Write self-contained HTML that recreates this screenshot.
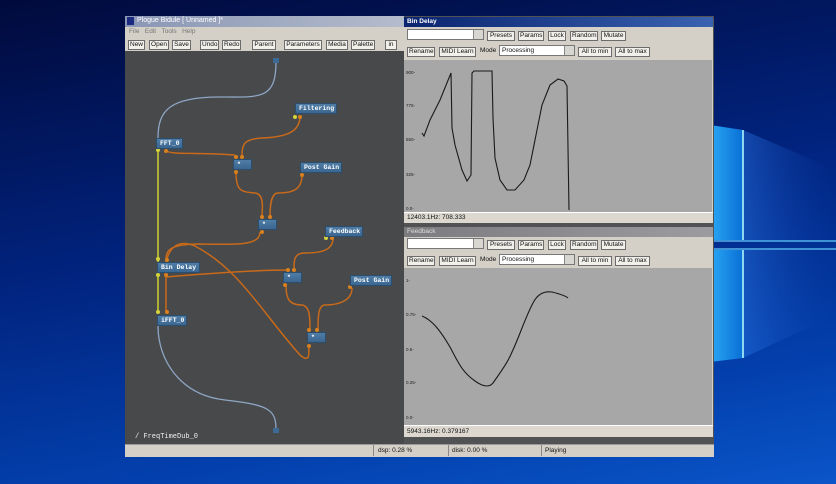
<!DOCTYPE html>
<html><head><meta charset="utf-8"><style>
*{margin:0;padding:0;box-sizing:border-box}
body{width:836px;height:484px;overflow:hidden;position:relative;font-family:"Liberation Sans",sans-serif;background:linear-gradient(170deg,#010a3c 0%,#01237e 45%,#0340ad 80%,#0a55c9 100%)}
.a{position:absolute}
.btn{position:absolute;height:10px;background:#f2f0ea;border:1px solid #6c6c6c;font-size:6.5px;line-height:8px;text-align:center;color:#111;padding:0 1px;white-space:nowrap}
.node{position:absolute;height:11px;background:linear-gradient(#4f7da6,#3a6690);color:#fff;font-family:"Liberation Mono",monospace;font-weight:bold;font-size:6.5px;line-height:10px;padding-left:3px;border:1px solid #2c4e6e;white-space:nowrap;overflow:hidden}
.t{position:absolute;font-size:6.5px;color:#111;white-space:nowrap}
.combo{position:absolute;height:11px;background:#fff;border:1px solid #777}
.combo:after{content:"";position:absolute;right:0;top:0;width:9px;height:9px;background:#d8d6d0;border-left:1px solid #888}
</style></head><body>
<svg class="a" style="left:0;top:0" width="836" height="484">
<defs><linearGradient id="pn" x1="0" x2="1"><stop offset="0" stop-color="#2aa8f5"/><stop offset="1" stop-color="#0a6fd6"/></linearGradient>
<linearGradient id="bm" x1="0" x2="1"><stop offset="0" stop-color="#2a7ae8" stop-opacity=".45"/><stop offset="1" stop-color="#1040b0" stop-opacity="0"/></linearGradient></defs>
<polygon points="743,130 836,170 836,240 743,240" fill="url(#bm)"/>
<polygon points="743,250 836,250 836,315 743,358" fill="url(#bm)"/>
<polygon points="710,125 743,130 743,240 710,240" fill="url(#pn)"/>
<polygon points="710,250 743,250 743,358 710,362" fill="url(#pn)"/>
<line x1="743" y1="130" x2="743" y2="240" stroke="#bff" stroke-width="1.5"/>
<line x1="743" y1="250" x2="743" y2="358" stroke="#bff" stroke-width="1.5"/>
<line x1="710" y1="241" x2="836" y2="241" stroke="#6cf" stroke-width="1.2"/>
<line x1="710" y1="249" x2="836" y2="249" stroke="#6cf" stroke-width="1.2"/>
</svg>
<div class="a" style="left:125px;top:16px;width:589px;height:441px;background:#d4d0c8"></div>
<div class="a" style="left:125px;top:16px;width:279px;height:11px;background:linear-gradient(90deg,#8a96b4,#b4bccc)"></div>
<div class="a" style="left:127px;top:17px;width:7px;height:8px;background:#1a2a80"></div>
<div class="t" style="left:137px;top:17px;color:#fff;font-size:7px">Plogue Bidule [ Unnamed ]*</div>
<div class="t" style="left:129px;top:28px;color:#777">File&nbsp;&nbsp;&nbsp;Edit&nbsp;&nbsp;&nbsp;Tools&nbsp;&nbsp;&nbsp;Help</div>
<div class="btn" style="left:128px;top:40px;width:17px">New</div>
<div class="btn" style="left:149px;top:40px;width:20px">Open</div>
<div class="btn" style="left:172px;top:40px;width:19px">Save</div>
<div class="btn" style="left:200px;top:40px;width:19px">Undo</div>
<div class="btn" style="left:222px;top:40px;width:19px">Redo</div>
<div class="btn" style="left:252px;top:40px;width:24px">Parent</div>
<div class="btn" style="left:284px;top:40px;width:38px">Parameters</div>
<div class="btn" style="left:326px;top:40px;width:22px">Media</div>
<div class="btn" style="left:351px;top:40px;width:24px">Palette</div>
<div class="btn" style="left:385px;top:40px;width:12px">in</div>
<div class="a" style="left:125px;top:51px;width:279px;height:393px;background:#47494b"></div>
<svg class="a" style="left:0;top:0" width="836" height="484" fill="none">
<g stroke="#8fa6c4" stroke-width="1.3">
<path d="M276,62 C276,100 260,97 220,97 C170,97 158,110 158,138"/>
<path d="M158,326 C158,360 180,395 225,400 C270,405 276,410 276,430"/>
</g>
<g stroke="#c7c930" stroke-width="1.6"><path d="M158,150 L158,262 M158,277 L158,313"/></g>
<g stroke="#c86a1a" stroke-width="1.5">
<path d="M166,151 C175,155 190,152 235,155"/>
<path d="M300,116 C300,130 290,137 262,138 C243,139 242,145 242,157"/>
<path d="M236,172 C236,190 240,192 255,193 C265,194 262,210 262,217"/>
<path d="M302,175 C302,190 292,193 278,193 C270,193 270,210 270,217"/>
<path d="M260,232 C260,245 240,245 200,244 C170,244 166,250 166,260"/>
<path d="M333,238 C333,250 322,253 305,253 C293,253 294,262 294,270"/>
<path d="M166,277 C190,275 250,270 288,270"/>
<path d="M166,277 L166,313"/>
<path d="M286,285 C286,300 290,305 302,305 C310,306 310,318 310,330"/>
<path d="M352,288 C352,300 340,305 325,305 C318,305 318,318 318,330"/>
<path d="M166,262 C170,245 180,240 195,246 C240,270 260,310 300,355 C312,365 308,350 309,345"/>
</g>
<g fill="#d8801e"><circle cx="166" cy="151" r="2"/><circle cx="300" cy="117" r="2"/><circle cx="236" cy="157" r="2"/><circle cx="242" cy="157" r="2"/><circle cx="236" cy="172" r="2"/><circle cx="302" cy="175" r="2"/><circle cx="262" cy="217" r="2"/><circle cx="270" cy="217" r="2"/><circle cx="262" cy="232" r="2"/><circle cx="332" cy="238" r="2"/><circle cx="167" cy="260" r="2"/><circle cx="166" cy="275" r="2"/><circle cx="288" cy="270" r="2"/><circle cx="294" cy="270" r="2"/><circle cx="285" cy="285" r="2"/><circle cx="350" cy="287" r="2"/><circle cx="309" cy="330" r="2"/><circle cx="317" cy="330" r="2"/><circle cx="309" cy="346" r="2"/><circle cx="167" cy="312" r="2"/></g>
<g fill="#d5d43a"><circle cx="158" cy="150" r="2"/><circle cx="295" cy="117" r="2"/><circle cx="326" cy="238" r="2"/><circle cx="158" cy="259" r="2"/><circle cx="158" cy="275" r="2"/><circle cx="158" cy="312" r="2"/></g>
<rect x="273" y="58" width="6" height="5" fill="#3d6a94"/><rect x="273" y="428" width="6" height="5" fill="#3d6a94"/>
</svg>
<div class="node" style="left:156px;top:138px;width:27px">FFT_0</div>
<div class="node" style="left:295px;top:103px;width:42px">Filtering</div>
<div class="node" style="left:233px;top:159px;width:19px">*</div>
<div class="node" style="left:300px;top:162px;width:42px">Post Gain</div>
<div class="node" style="left:258px;top:219px;width:19px">*</div>
<div class="node" style="left:325px;top:226px;width:38px">Feedback</div>
<div class="node" style="left:157px;top:262px;width:43px">Bin Delay</div>
<div class="node" style="left:283px;top:272px;width:19px">*</div>
<div class="node" style="left:350px;top:275px;width:42px">Post Gain</div>
<div class="node" style="left:157px;top:315px;width:30px">iFFT_0</div>
<div class="node" style="left:307px;top:332px;width:19px">*</div>
<div class="t" style="left:135px;top:433px;color:#eee;font-family:'Liberation Mono',monospace;font-size:7px">/ FreqTimeDub_0</div>
<div class="a" style="left:404px;top:16px;width:310px;height:428px;background:#505254"></div>
<div class="a" style="left:404px;top:17px;width:309px;height:10px;background:linear-gradient(90deg,#0a2470,#3a62b0)"></div>
<div class="t" style="left:407px;top:18px;color:#fff;font-weight:bold">Bin Delay</div>
<div class="a" style="left:404px;top:27px;width:309px;height:185px;background:#d4d0c8"></div>
<div class="combo" style="left:407px;top:29px;width:77px"></div>
<div class="btn" style="left:487px;top:31px;width:28px">Presets</div>
<div class="btn" style="left:518px;top:31px;width:26px">Params</div>
<div class="btn" style="left:548px;top:31px;width:18px">Lock</div>
<div class="btn" style="left:570px;top:31px;width:28px">Random</div>
<div class="btn" style="left:601px;top:31px;width:25px">Mutate</div>
<div class="btn" style="left:407px;top:47px;width:28px">Rename</div>
<div class="btn" style="left:439px;top:47px;width:37px">MIDI Learn</div>
<div class="t" style="left:480px;top:47px">Mode</div>
<div class="combo" style="left:499px;top:45px;width:76px"><span class="t" style="left:2px;top:1px">Processing</span></div>
<div class="btn" style="left:578px;top:47px;width:34px">All to min</div>
<div class="btn" style="left:615px;top:47px;width:35px">All to max</div>
<div class="a" style="left:404px;top:60px;width:308px;height:152px;background:#a7a7a7"></div>
<div class="a" style="left:404px;top:212px;width:309px;height:11px;background:#dcd8d0;border-top:1px solid #fff"><span class="t" style="left:3px;top:1px">12403.1Hz: 708.333</span></div>
<div class="a" style="left:404px;top:227px;width:309px;height:10px;background:linear-gradient(90deg,#7c7c80,#9c9ca0)"></div>
<div class="t" style="left:407px;top:228px;color:#ddd">Feedback</div>
<div class="a" style="left:404px;top:237px;width:309px;height:188px;background:#d4d0c8"></div>
<div class="combo" style="left:407px;top:238px;width:77px"></div>
<div class="btn" style="left:487px;top:240px;width:28px">Presets</div>
<div class="btn" style="left:518px;top:240px;width:26px">Params</div>
<div class="btn" style="left:548px;top:240px;width:18px">Lock</div>
<div class="btn" style="left:570px;top:240px;width:28px">Random</div>
<div class="btn" style="left:601px;top:240px;width:25px">Mutate</div>
<div class="btn" style="left:407px;top:256px;width:28px">Rename</div>
<div class="btn" style="left:439px;top:256px;width:37px">MIDI Learn</div>
<div class="t" style="left:480px;top:256px">Mode</div>
<div class="combo" style="left:499px;top:254px;width:76px"><span class="t" style="left:2px;top:1px">Processing</span></div>
<div class="btn" style="left:578px;top:256px;width:34px">All to min</div>
<div class="btn" style="left:615px;top:256px;width:35px">All to max</div>
<div class="a" style="left:404px;top:268px;width:308px;height:157px;background:#a7a7a7"></div>
<div class="a" style="left:404px;top:425px;width:309px;height:12px;background:#dcd8d0;border-top:1px solid #fff"><span class="t" style="left:3px;top:2px">5943.16Hz: 0.379167</span></div>
<svg class="a" style="left:0;top:0" width="836" height="484" fill="none">
<g fill="#222" font-size="4.5" font-family="Liberation Sans"><text x="406" y="74">900-</text><text x="406" y="107">775-</text><text x="406" y="141">550-</text><text x="406" y="176">325-</text><text x="406" y="210">0.0-</text>
<text x="406" y="282">1-</text><text x="406" y="316">0.75-</text><text x="406" y="351">0.5-</text><text x="406" y="384">0.25-</text><text x="406" y="419">0.0-</text></g>
<path stroke="#1a1a1a" stroke-width="1.1" d="M422,133 L424,136 L430,120 L440,100 L451,73 L452,128 L455,145 L462,170 L467,181 L471,175 L472,73 L474,71 L492,71 L493,118 L495,158 L500,180 L507,190 L515,190 L524,180 L530,165 L536,135 L542,105 L550,85 L558,79 L564,81 L567,86 L569,210"/>
<path stroke="#1a1a1a" stroke-width="1.1" d="M422,316 C432,320 440,330 450,347 C458,362 462,372 475,381 C482,386 489,388 493,383 C500,373 508,362 512,352 C520,335 525,318 533,303 C538,293 545,291 552,292 C560,294 566,296 568,298"/>
</svg>
<div class="a" style="left:125px;top:444px;width:589px;height:13px;background:#d4d0c8;border-top:1px solid #999"></div>
<div class="a" style="left:373px;top:445px;width:1px;height:11px;background:#888"></div>
<div class="a" style="left:448px;top:445px;width:1px;height:11px;background:#888"></div>
<div class="a" style="left:541px;top:445px;width:1px;height:11px;background:#888"></div>
<div class="t" style="left:378px;top:447px">dsp: 0.28 %</div>
<div class="t" style="left:452px;top:447px">disk: 0.00 %</div>
<div class="t" style="left:545px;top:447px">Playing</div>
</body></html>
